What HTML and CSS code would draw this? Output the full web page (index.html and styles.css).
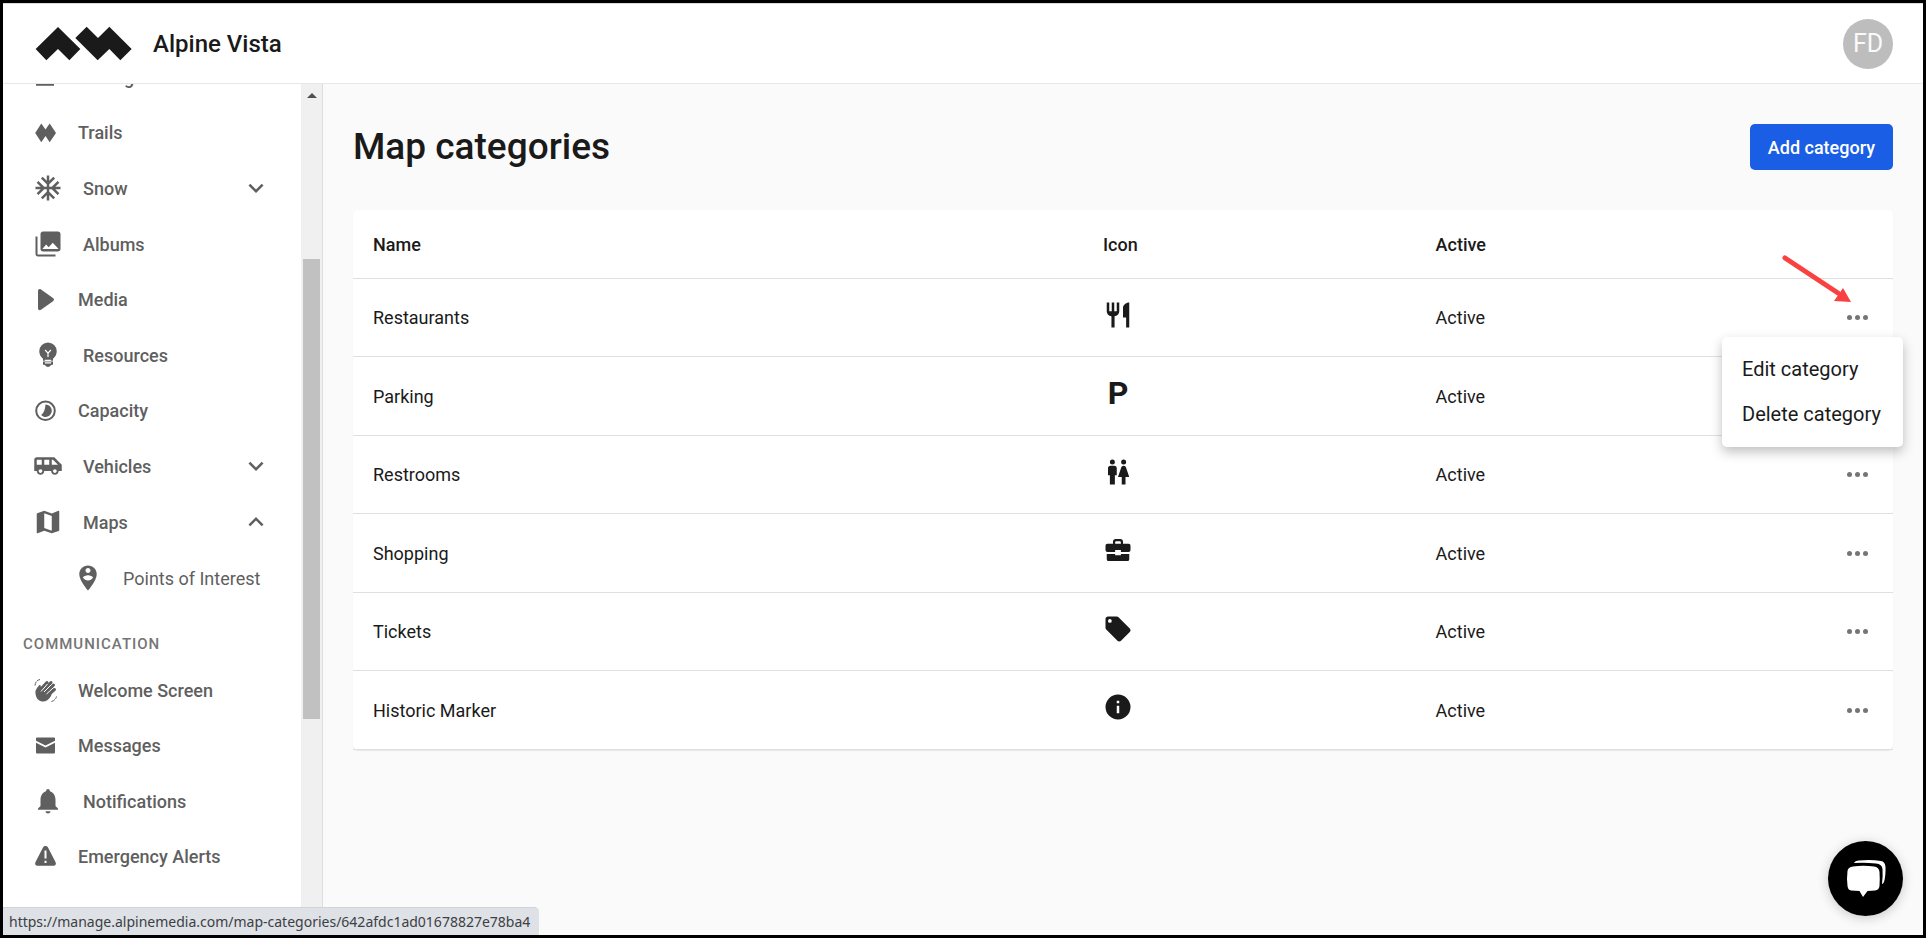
FILE: index.html
```html
<!DOCTYPE html>
<html lang="en">
<head>
    <meta charset="UTF-8">
    <meta name="viewport" content="width=device-width, initial-scale=1.0">
    <title>Map categories - Alpine Vista</title>
    <link rel="stylesheet" href="styles.css">
</head>
<body>
    <div class="app">
        <header class="topbar">
            <svg class="logo" viewBox="105 78 294 105" aria-hidden="true">
                <path d="M107 147L174 81L241 147L208 181L174 147L139 181Z"/>
                <path d="M226 114L260 80L294 114L328 80L395 147L361 181L328 147L293 181Z"/>
            </svg>
            <span class="brand">Alpine Vista</span>
            <button class="avatar" type="button">FD</button>
        </header>
        <div class="body">
            <aside class="sidebar">
                <nav class="nav">
                    <a class="nav-item" href="#">
                        <svg class="icon" viewBox="0 0 24 24"><path d="M3 4h14v8H3zM2.4 17h14.4v2H2.4z"/></svg>
                        <span>Dining</span>
                    </a>
                    <a class="nav-item small" href="#">
                        <svg class="icon" viewBox="0 0 25 25"><path d="M8.3 3.5L12.5 9.5L16.7 3.5L23 13L16.7 22.2L12.5 16L8.3 22.2L2.2 13Z"/></svg>
                        <span>Trails</span>
                    </a>
                    <button class="nav-item" type="button">
                        <svg class="icon" viewBox="0 0 24 24"><path d="M22 11h-4.17l3.24-3.24-1.41-1.42L15 11h-2V9l4.66-4.66-1.42-1.41L13 6.17V2h-2v4.17L7.76 2.93 6.34 4.34 11 9v2H9L4.34 6.34 2.93 7.76 6.17 11H2v2h4.17l-3.24 3.24 1.41 1.42L9 13h2v2l-4.66 4.66 1.42 1.41L11 17.83V22h2v-4.17l3.24 3.24 1.42-1.41L13 15v-2h2l4.66 4.66 1.41-1.42L17.83 13H22z"/></svg>
                        <span>Snow</span>
                        <svg class="icon chevron" viewBox="0 0 24 24"><path d="M7.41 8.58L12 13.17L16.59 8.58L18 10L12 16L6 10Z"/></svg>
                    </button>
                    <a class="nav-item" href="#">
                        <svg class="icon" viewBox="0 0 24 24"><path fill-rule="evenodd" d="M22 16V4c0-1.1-.9-2-2-2H8c-1.1 0-2 .9-2 2v12c0 1.1.9 2 2 2h12c1.1 0 2-.9 2-2zM7.5 16L10.5 12.4L12.5 14.6L15.8 11L20.5 16zM2 6v14c0 1.1.9 2 2 2h14v-1.6H3.6V6H2z"/></svg>
                        <span>Albums</span>
                    </a>
                    <a class="nav-item small" href="#">
                        <svg class="icon" viewBox="0 0 25 25"><path d="M5 4c0-1.8 1.6-2.5 3-1.5l12 8.5c1.3 1 1.3 2.2 0 3.2L8 22.7c-1.4 1-3 .3-3-1.5z"/></svg>
                        <span>Media</span>
                    </a>
                    <a class="nav-item" href="#">
                        <svg class="icon" viewBox="0 0 24 24"><path d="M12 2a7 7 0 0 0-7 7c0 2.7 1.4 4.7 3 6v1.5h8V15c1.6-1.3 3-3.3 3-6a7 7 0 0 0-7-7zM8 17.2h8V19c0 .6-.4 1-1 1h-.6c-.3.9-1.3 1.5-2.4 1.5s-2.1-.6-2.4-1.5H9c-.6 0-1-.4-1-1z"/><path class="cut" d="M9.7 8L12 10.5L14.3 8M12 10.5V13.5M9.5 16.2h5M9.5 18.2h5"/></svg>
                        <span>Resources</span>
                    </a>
                    <a class="nav-item small" href="#">
                        <svg class="icon" viewBox="0 0 25 25"><circle class="line" cx="12.5" cy="12.8" r="9.3"/><path d="M12.5 6.5A6.2 6.2 0 1 1 8.2 17.1Q12 14 12.5 6.5Z"/></svg>
                        <span>Capacity</span>
                    </a>
                    <button class="nav-item" type="button">
                        <svg class="icon" viewBox="0 0 24 24"><path d="M17 5H3c-1.1 0-2 .89-2 2v9h2c0 1.65 1.34 3 3 3s3-1.35 3-3h5.5c0 1.65 1.34 3 3 3s3-1.35 3-3H23v-5l-6-6zM3 11V7h4v4H3zm3 6.5c-.83 0-1.5-.67-1.5-1.5s.67-1.5 1.5-1.5 1.5.67 1.5 1.5-.67 1.5-1.5 1.5zm7-6.5H9V7h4v4zm4.5 6.5c-.83 0-1.5-.67-1.5-1.5s.67-1.5 1.5-1.5 1.5.67 1.5 1.5-.67 1.5-1.5 1.5zM15 11V7h1l4 4h-5z"/></svg>
                        <span>Vehicles</span>
                        <svg class="icon chevron" viewBox="0 0 24 24"><path d="M7.41 8.58L12 13.17L16.59 8.58L18 10L12 16L6 10Z"/></svg>
                    </button>
                    <button class="nav-item" type="button">
                        <svg class="icon" viewBox="0 0 24 24"><path d="M15,19L9,16.89V5L15,7.11M20.5,3C20.44,3 20.39,3 20.34,3L15,5.1L9,3L3.36,4.9C3.15,4.97 3,5.15 3,5.38V20.5A0.5,0.5 0 0,0 3.5,21C3.55,21 3.61,21 3.66,20.97L9,18.9L15,21L20.64,19.1C20.85,19 21,18.85 21,18.62V3.5A0.5,0.5 0 0,0 20.5,3Z"/></svg>
                        <span>Maps</span>
                        <svg class="icon chevron" viewBox="0 0 24 24"><path d="M7.41 15.41L12 10.83L16.59 15.41L18 14L12 8L6 14Z"/></svg>
                    </button>
                    <a class="nav-item sub" href="#">
                        <svg class="icon" viewBox="0 0 24 24"><path d="M12 2C8.14 2 5 5.14 5 9c0 5.25 7 13 7 13s7-7.75 7-13c0-3.86-3.14-7-7-7zm0 2c1.1 0 2 .9 2 2 0 1.11-.9 2-2 2s-2-.89-2-2c0-1.1.9-2 2-2zm0 10c-1.67 0-3.14-.85-4-2.15.02-1.32 2.67-2.05 4-2.05s3.98.73 4 2.05c-.86 1.3-2.33 2.15-4 2.15z"/></svg>
                        <span>Points of Interest</span>
                    </a>
                    <h2 class="nav-title">COMMUNICATION</h2>
                    <a class="nav-item small" href="#">
                        <svg class="icon" viewBox="0 0 25 25">
                            <path d="M2.5 15.5C2 12 4 10 6 7.5C7 6.5 8.2 7.5 7.8 9L12 4.5L18 7L20.5 10.5L18 18C15 23 11 24.5 7.5 23C4 21.7 3 19 2.5 15.5Z"/>
                            <path class="finger" d="M8 12L14 4.5M10 14L18 4.5M12.5 15.5L20.5 7M14.5 17.5L21.5 11.5"/>
                            <path class="cut" d="M8 13.5L14.5 6M11 14L18.5 6.5M13.5 16L20 10"/>
                            <path class="wave" d="M2 7.5Q2.5 2.5 7 1.5M18.5 23.5Q22.5 22.5 23.5 18.5"/>
                        </svg>
                        <span>Welcome Screen</span>
                    </a>
                    <a class="nav-item small" href="#">
                        <svg class="icon" viewBox="0 0 25 25"><path d="M4 4.5h17q1 0 1 1v2.3L12.5 12.5L3 7.8V5.5q0-1 1-1zM3 9.8L12.5 14.5L22 9.8v9.7q0 1-1 1H4q-1 0-1-1z"/></svg>
                        <span>Messages</span>
                    </a>
                    <a class="nav-item" href="#">
                        <svg class="icon" viewBox="0 0 24 24"><path d="M12 22c1.1 0 2-.8 2-1.8h-4c0 1 .89 1.8 2 1.8zM18 16v-5c0-3.07-1.64-6.14-4.5-6.82V4c0-1-.67-1.7-1.5-1.7s-1.5.7-1.5 1.7v.18C7.63 4.86 6 7.92 6 11v5l-2 2v1h16v-1z"/></svg>
                        <span>Notifications</span>
                    </a>
                    <a class="nav-item small" href="#">
                        <svg class="icon" viewBox="0 0 25 25"><path d="M10 3.5c1-2 4-2 5 0l7.5 14.5c1 2 0 3.8-2 3.8h-16c-2 0-3-1.8-2-3.8z"/><path class="cut thick" d="M12.5 6.5V14.5M12.5 16.8V19"/></svg>
                        <span>Emergency Alerts</span>
                    </a>
                </nav>
                <div class="scrollbar">
                    <span class="scroll-up"></span>
                    <span class="scroll-thumb"></span>
                </div>
            </aside>
            <main class="main">
                <div class="page-head">
                    <h1>Map categories</h1>
                    <button class="btn-primary" type="button">Add category</button>
                </div>
                <table class="categories">
                    <thead>
                        <tr>
                            <th class="col-name">Name</th>
                            <th class="col-icon">Icon</th>
                            <th>Active</th>
                            <th></th>
                        </tr>
                    </thead>
                    <tbody>
                        <tr>
                            <td>Restaurants</td>
                            <td class="icon-cell"><svg class="icon" viewBox="0 0 24 24"><path d="M11,9H9V2H7V9H5V2H3V9C3,11.12 4.66,12.84 6.75,12.97V22H9.25V12.97C11.34,12.84 13,11.12 13,9V2H11V9M16,6V14H18.5V22H21V2C18.24,2 16,4.24 16,6Z"/></svg></td>
                            <td>Active</td>
                            <td class="actions">
                                <button class="more" type="button" aria-label="More"><i></i><i></i><i></i></button>
                                <svg class="arrow" viewBox="0 0 72 52"><path class="shaft" d="M5 6L58 41"/><path class="head" d="M63 36L71 50L54 49Z"/></svg>
                                <div class="menu">
                                    <a href="#">Edit category</a>
                                    <a href="#">Delete category</a>
                                </div>
                            </td>
                        </tr>
                        <tr>
                            <td>Parking</td>
                            <td class="icon-cell"><span class="icon parking">P</span></td>
                            <td>Active</td>
                            <td class="actions"><button class="more" type="button" aria-label="More"><i></i><i></i><i></i></button></td>
                        </tr>
                        <tr>
                            <td>Restrooms</td>
                            <td class="icon-cell"><svg class="icon" viewBox="0 0 24 24"><path d="M7.5,2A2,2 0 0,1 9.5,4A2,2 0 0,1 7.5,6A2,2 0 0,1 5.5,4A2,2 0 0,1 7.5,2M6,7H9A2,2 0 0,1 11,9V14.5H9.5V22H5.5V14.5H4V9A2,2 0 0,1 6,7M16.5,2A2,2 0 0,1 18.5,4A2,2 0 0,1 16.5,6A2,2 0 0,1 14.5,4A2,2 0 0,1 16.5,2M15,22V16H12L14.59,8.41C14.84,7.59 15.6,7 16.5,7C17.4,7 18.16,7.59 18.41,8.41L21,16H18V22H15Z"/></svg></td>
                            <td>Active</td>
                            <td class="actions"><button class="more" type="button" aria-label="More"><i></i><i></i><i></i></button></td>
                        </tr>
                        <tr>
                            <td>Shopping</td>
                            <td class="icon-cell"><svg class="icon" viewBox="0 0 24 24"><path fill-rule="evenodd" d="M8 7V5.5Q8 3.2 10.3 3.2H13.7Q16 3.2 16 5.5V7H20.5Q22 7 22 8.5V12Q22 13.6 20.5 13.6H14.3V12H9.7V13.6H3.5Q2 13.6 2 12V8.5Q2 7 3.5 7ZM9.7 7H14.3V5.8Q14.3 4.9 13.4 4.9H10.6Q9.7 4.9 9.7 5.8ZM3 15.2H9.7V16.2H14.3V15.2H21V19.3Q21 20.8 19.5 20.8H4.5Q3 20.8 3 19.3Z"/></svg></td>
                            <td>Active</td>
                            <td class="actions"><button class="more" type="button" aria-label="More"><i></i><i></i><i></i></button></td>
                        </tr>
                        <tr>
                            <td>Tickets</td>
                            <td class="icon-cell"><svg class="icon" viewBox="0 0 24 24"><path d="M5.5,7A1.5,1.5 0 0,1 4,5.5A1.5,1.5 0 0,1 5.5,4A1.5,1.5 0 0,1 7,5.5A1.5,1.5 0 0,1 5.5,7M21.41,11.58L12.41,2.58C12.05,2.22 11.55,2 11,2H4C2.89,2 2,2.89 2,4V11C2,11.55 2.22,12.05 2.59,12.41L11.58,21.41C11.95,21.77 12.45,22 13,22C13.55,22 14.05,21.77 14.41,21.41L21.41,14.41C21.78,14.05 22,13.55 22,13C22,12.44 21.77,11.94 21.41,11.58Z"/></svg></td>
                            <td>Active</td>
                            <td class="actions"><button class="more" type="button" aria-label="More"><i></i><i></i><i></i></button></td>
                        </tr>
                        <tr>
                            <td>Historic Marker</td>
                            <td class="icon-cell"><svg class="icon" viewBox="0 0 24 24"><path d="M13,9H11V7H13M13,17H11V11H13M12,2A10,10 0 0,0 2,12A10,10 0 0,0 12,22A10,10 0 0,0 22,12A10,10 0 0,0 12,2Z"/></svg></td>
                            <td>Active</td>
                            <td class="actions"><button class="more" type="button" aria-label="More"><i></i><i></i><i></i></button></td>
                        </tr>
                    </tbody>
                </table>
            </main>
        </div>
    </div>
    <div class="status">https://manage.alpinemedia.com/map-categories/642afdc1ad01678827e78ba4</div>
    <button class="chat" type="button" aria-label="Chat">
        <svg viewBox="0 0 75 75">
            <path d="M25 25.5Q35 24 46 25.5Q51 26 51.5 31Q52 38 51.5 45Q51 49 47 49.5L39.5 50L35 56L31.5 50L23 49.5Q20 49 19.5 45Q18.5 38 19.5 30Q20 26 25 25.5Z"/>
            <path d="M26 22Q27 19.5 31 19.5Q43 18.5 53 20Q57 20.5 57.5 26Q57.8 35 56 41Q55 43 54 43Q55 35 54.5 28Q54 23 48 22.5Q38 21.5 26 22Z"/>
        </svg>
    </button>
</body>
</html>
```
FILE: styles.css
```css
* {
    box-sizing: border-box;
}
body {
    margin: 0;
    font-family: Roboto, sans-serif;
    font-size: 18px;
    color: #1a1a1a;
}
button {
    font-family: inherit;
    font-size: 18px;
    border: none;
    background: none;
    padding: 0;
    cursor: pointer;
}
a {
    color: inherit;
    text-decoration: none;
}
.app {
    display: flex;
    flex-direction: column;
    height: 100vh;
    border: 3px solid #000;
    background: #fafafa;
    overflow: hidden;
}
.topbar {
    display: flex;
    align-items: center;
    flex-shrink: 0;
    height: 81px;
    padding: 0 30px 0 32px;
    background: #fff;
    border-top: 1px solid #ddd;
    border-bottom: 1px solid #e8e8e8;
}
.logo {
    width: 98px;
    height: 35px;
    fill: #1a1a1a;
}
.brand {
    margin-left: 20px;
    font-size: 24px;
    font-weight: 500;
}
.avatar {
    width: 50px;
    height: 50px;
    margin-left: auto;
    border-radius: 50%;
    background: #bdbdbd;
    color: #fafafa;
    font-size: 25px;
}
.body {
    display: flex;
    flex: 1;
    min-height: 0;
}

/* sidebar */
.sidebar {
    display: flex;
    flex-shrink: 0;
    width: 320px;
    overflow: hidden;
    background: #fff;
    border-right: 1px solid #ddd;
}
.nav {
    flex: 1;
    margin-top: -35px;
    color: #5f5f5f;
}
.nav-item {
    display: flex;
    align-items: center;
    gap: 20px;
    width: 100%;
    height: 56px;
    padding: 0 30px;
    color: #5f5f5f;
    font-weight: 500;
}
.nav-item.small {
    height: 55px;
}
.nav-item.sub {
    padding-left: 70px;
    font-weight: 400;
}
.icon {
    width: 30px;
    height: 30px;
    flex-shrink: 0;
    fill: currentColor;
}
.small .icon {
    width: 25px;
    height: 25px;
}
.chevron {
    margin-left: auto;
}
.icon .cut {
    fill: none;
    stroke: #fff;
    stroke-width: 1;
}
.icon .thick {
    stroke-width: 2;
}
.icon .line {
    fill: none;
    stroke: currentColor;
    stroke-width: 2;
}
.icon .finger {
    fill: none;
    stroke: currentColor;
    stroke-width: 3;
    stroke-linecap: round;
}
.icon .wave {
    fill: none;
    stroke: currentColor;
    stroke-width: 1;
    stroke-dasharray: 4 1;
}
.nav-title {
    height: 57px;
    margin: 0;
    padding: 29px 0 0 20px;
    font-size: 15px;
    line-height: 18px;
    font-weight: 500;
    letter-spacing: 1px;
    color: #757575;
}
.scrollbar {
    display: flex;
    flex-direction: column;
    align-items: center;
    width: 21px;
    background: #f0f0f0;
}
.scroll-up {
    margin-top: 9px;
    border: 5px solid transparent;
    border-top: none;
    border-bottom-color: #505050;
}
.scroll-thumb {
    width: 17px;
    height: 54%;
    margin-top: 161px;
    background: #c1c1c1;
}

/* content */
.main {
    flex: 1;
    padding: 40px 30px;
}
.page-head {
    display: flex;
    align-items: center;
    justify-content: space-between;
    margin-bottom: 40px;
}
h1 {
    margin: 0;
    font-size: 37px;
    line-height: 46px;
    font-weight: 500;
}
.btn-primary {
    height: 46px;
    padding: 0 18px;
    border-radius: 5px;
    background: #1a5ee6;
    color: #fff;
    font-weight: 500;
}
.categories {
    width: 100%;
    table-layout: fixed;
    border-collapse: separate;
    border-spacing: 0;
    border-radius: 5px;
    background: #fff;
    box-shadow: 0 1px 1px rgba(0, 0, 0, 0.08);
}
.categories th {
    height: 69px;
    padding: 0 20px;
    border-bottom: 1px solid #e0e0e0;
    text-align: left;
    font-weight: 500;
}
.categories td {
    height: 78px;
    padding: 0 20px;
    border-bottom: 1px solid #e0e0e0;
}
.categories tr:nth-child(even) td {
    height: 79px;
}
.col-name {
    width: 47.4%;
}
.col-icon {
    width: 21.6%;
}
.categories .icon-cell {
    padding-bottom: 6px;
}
.icon-cell .icon {
    display: block;
}
.icon-cell .parking {
    font-size: 32px;
    line-height: 30px;
    font-weight: 700;
    text-align: center;
}
.actions {
    position: relative;
}
.more {
    display: flex;
    align-items: center;
    justify-content: center;
    gap: 3px;
    width: 32px;
    height: 32px;
    margin-left: auto;
}
.more i {
    width: 5px;
    height: 5px;
    border-radius: 50%;
    background: #757575;
}
.menu {
    position: absolute;
    top: 58px;
    right: -10px;
    z-index: 2;
    min-width: 181px;
    padding: 10px 20px;
    border-radius: 5px;
    background: #fff;
    box-shadow: 0 5px 12px rgba(0, 0, 0, 0.25);
    font-size: 20px;
    line-height: 45px;
    white-space: nowrap;
}
.menu a {
    display: block;
}
.arrow {
    position: absolute;
    top: -27px;
    right: 41px;
    width: 72px;
    height: 52px;
}
.arrow .shaft {
    stroke: #fa4141;
    stroke-width: 5;
    stroke-linecap: round;
}
.arrow .head {
    fill: #fa4141;
}

/* overlays */
.status {
    position: fixed;
    left: 3px;
    bottom: 3px;
    height: 28px;
    padding: 0 9px 0 6px;
    border-top: 1px solid #d0d3d8;
    border-radius: 0 5px 0 0;
    background: #dee1e6;
    color: #3c4043;
    font-family: "Noto Sans", sans-serif;
    font-size: 14px;
    line-height: 27px;
}
.chat {
    position: fixed;
    right: 23px;
    bottom: 22px;
    width: 75px;
    height: 75px;
    border-radius: 50%;
    background: #000;
    box-shadow: 0 2px 12px rgba(0, 0, 0, 0.2);
}
.chat svg {
    display: block;
    fill: #fff;
}
```
